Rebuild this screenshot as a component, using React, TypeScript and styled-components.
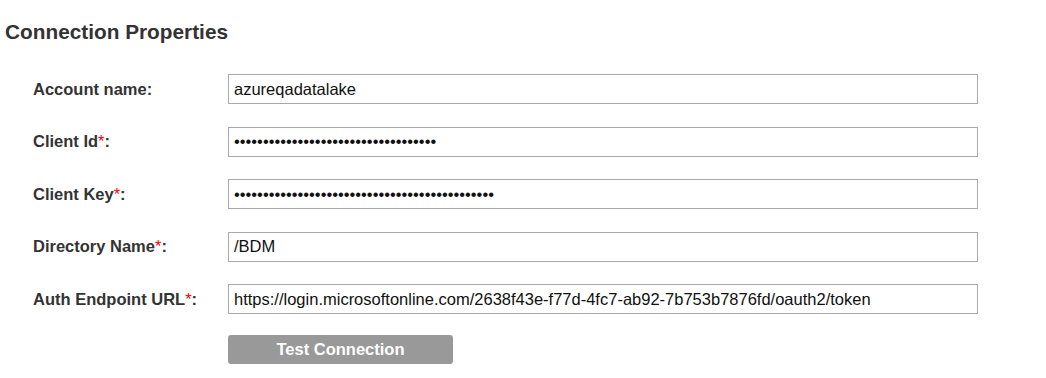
import React from "react";
import styled, { createGlobalStyle } from "styled-components";

const GlobalStyle = createGlobalStyle`
  body {
    margin: 0;
    background: #fff;
    font-family: "Liberation Sans", Arial, sans-serif;
  }
`;

const Page = styled.div`
  padding: 20px 5px 0 5px;
`;

const Title = styled.h2`
  margin: 0;
  font-size: 20.8px;
  line-height: 24px;
  font-weight: 700;
  color: #333;
`;

const Form = styled.div`
  display: grid;
  grid-template-columns: 195px 750px;
  row-gap: 22.5px;
  align-items: center;
  margin-top: 30px;
  padding-left: 28px;
`;

const Label = styled.label`
  font-size: 16.5px;
  font-weight: 700;
  color: #333;
`;

const Required = styled.span`
  color: #f00;
  font-weight: 400;
`;

const Field = styled.input`
  box-sizing: border-box;
  width: 750px;
  height: 30px;
  margin: 0;
  padding: 0 5px;
  border: 1px solid #a9a9a9;
  border-radius: 0;
  font-family: "Liberation Sans", Arial, sans-serif;
  font-size: 16.5px;
  color: #111;
  outline: none;
`;

const Actions = styled.div`
  grid-column: 2;
  margin-top: -1.5px;
`;

const Button = styled.button`
  width: 225px;
  height: 29px;
  border: none;
  border-radius: 3px;
  background: #999;
  color: #fff;
  font-family: "Liberation Sans", Arial, sans-serif;
  font-size: 16.5px;
  font-weight: 700;
  cursor: pointer;
`;

const fields = [
  { label: "Account name", required: false, type: "text", value: "azureqadatalake" },
  { label: "Client Id", required: true, type: "password", value: "x".repeat(35) },
  { label: "Client Key", required: true, type: "password", value: "x".repeat(45) },
  { label: "Directory Name", required: true, type: "text", value: "/BDM" },
  {
    label: "Auth Endpoint URL",
    required: true,
    type: "text",
    value:
      "https://login.microsoftonline.com/2638f43e-f77d-4fc7-ab92-7b753b7876fd/oauth2/token",
  },
];

const App = () => {
  return (
    <>
      <GlobalStyle />
      <Page>
        <Title>Connection Properties</Title>
        <Form>
          {fields.map((f) => (
            <React.Fragment key={f.label}>
              <Label>
                {f.label}
                {f.required && <Required>*</Required>}:
              </Label>
              <Field type={f.type} defaultValue={f.value} readOnly />
            </React.Fragment>
          ))}
          <Actions>
            <Button>Test Connection</Button>
          </Actions>
        </Form>
      </Page>
    </>
  );
};

export default App;
